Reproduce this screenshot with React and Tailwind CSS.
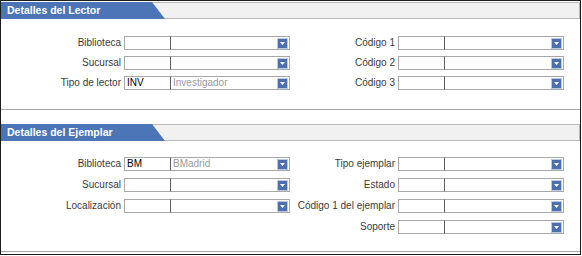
import React from 'react';

const lector = [
  [{ label: 'Biblioteca' }, { label: 'Código 1' }],
  [{ label: 'Sucursal' }, { label: 'Código 2' }],
  [{ label: 'Tipo de lector', code: 'INV', text: 'Investigador' }, { label: 'Código 3' }],
];

const ejemplar = [
  [{ label: 'Biblioteca', code: 'BM', text: 'BMadrid' }, { label: 'Tipo ejemplar' }],
  [{ label: 'Sucursal' }, { label: 'Estado' }],
  [{ label: 'Localización' }, { label: 'Código 1 del ejemplar' }],
  [null, { label: 'Soporte' }],
];

function DropButton() {
  return (
    <div className="w-[11px] h-[11px] bg-[#4c70ad] border border-[#b9c9e3] flex items-center justify-center">
      <svg width="5" height="3" viewBox="0 0 5 3">
        <path d="M0 0h5L2.5 3z" fill="#fff" />
      </svg>
    </div>
  );
}

function Field({ code = '', text = '' }) {
  return (
    <div className="flex h-[14px] w-[166px] text-[10px] leading-[12px]">
      <div className="w-[46px] h-full border border-r-0 border-[#a8a8a8] bg-white pl-[2px] text-black">
        {code}
      </div>
      <div className="flex-1 h-full flex items-center border border-[#a8a8a8] border-l-[#5e5e5e] bg-white pl-[2px] pr-[1px]">
        <span className="flex-1 text-[#9a9a9a]">{text}</span>
        <DropButton />
      </div>
    </div>
  );
}

function Cell({ item }) {
  if (!item) return <><div /><div /></>;
  return (
    <>
      <div className="text-right text-[10px] leading-[14px] text-[#3a3a3a] whitespace-nowrap">{item.label}</div>
      <Field code={item.code} text={item.text} />
    </>
  );
}

function Section({ title, rows, bodyClass }) {
  return (
    <div>
      <div className="flex h-[17px] bg-[#f1f1f1] border-y border-r border-[#b9b9b9]">
        <div className="-my-[1px] w-[164px] bg-[#4b75b6] pl-[6px] text-white font-bold text-[10.5px] leading-[17px] whitespace-nowrap [clip-path:polygon(0_0,151px_0,164px_100%,0_100%)]">
          {title}
        </div>
      </div>
      <div className={`grid grid-cols-[120px_166px_102px_166px] gap-x-[3px] border-b border-[#a5a5a5] ${bodyClass}`}>
        {rows.map((row, i) => (
          <React.Fragment key={i}>
            <Cell item={row[0]} />
            <Cell item={row[1]} />
          </React.Fragment>
        ))}
      </div>
    </div>
  );
}

export default function App() {
  return (
    <div className="w-[582px] h-[256px] bg-white">
      <div className="w-[581px] h-[255px] border border-[#1c1c1c] pt-[1px] font-['Liberation_Sans',Arial,sans-serif]">
        <Section title="Detalles del Lector" rows={lector} bodyClass="pt-[17px] pb-[19px] gap-y-[6px]" />
        <div className="h-[14px]" />
        <Section title="Detalles del Ejemplar" rows={ejemplar} bodyClass="pt-[16px] pb-[17px] gap-y-[7px]" />
      </div>
    </div>
  );
}
